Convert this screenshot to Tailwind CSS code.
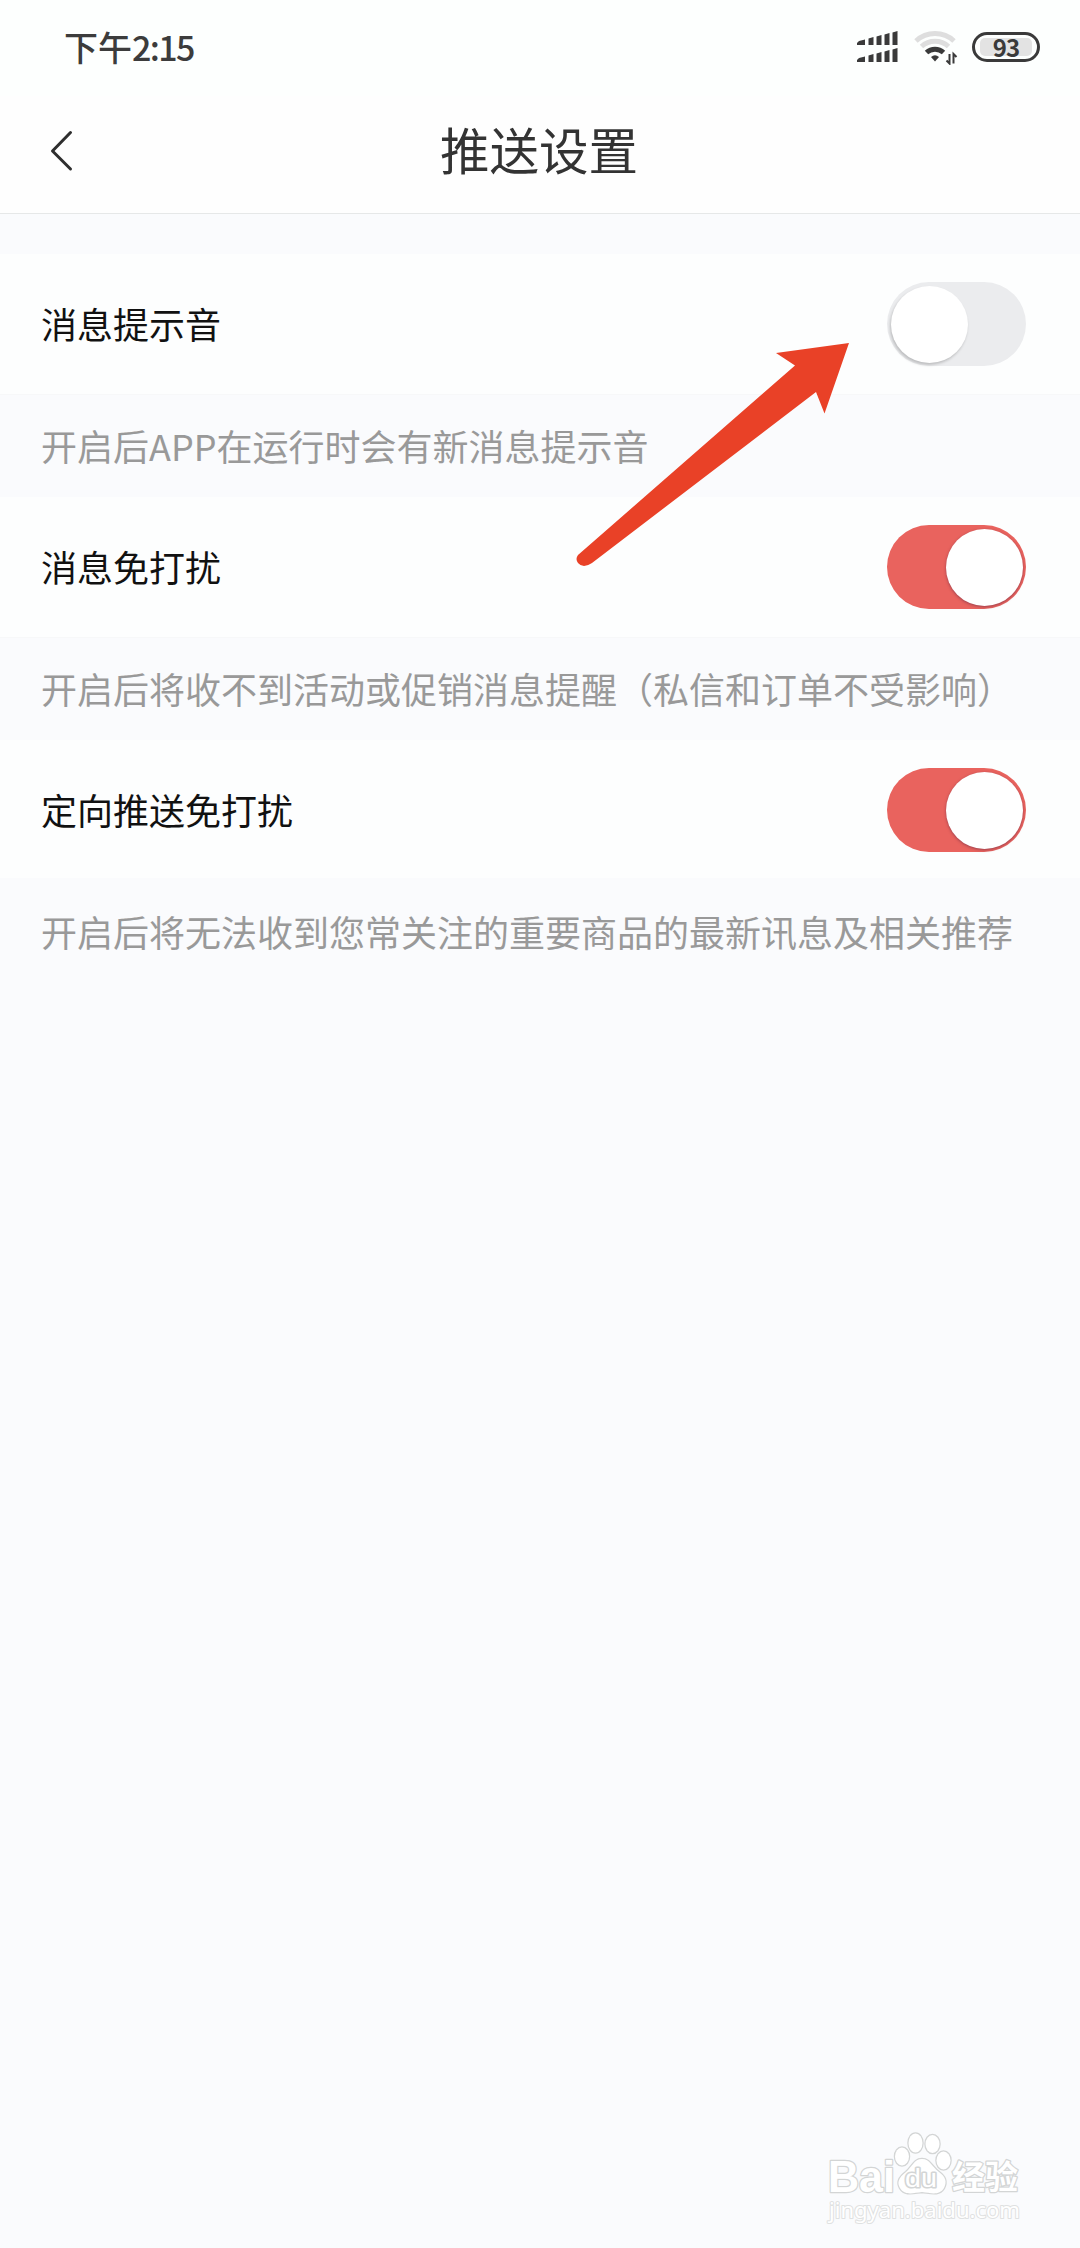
<!DOCTYPE html>
<html lang="zh-CN">
<head>
    <meta charset="UTF-8">
    <meta name="viewport" content="width=device-width, initial-scale=1.0">
    <title>推送设置</title>
    <script src="https://cdn.jsdelivr.net/npm/@tailwindcss/browser@4"></script>
    <style>
        body {
            font-family: 'Noto Sans CJK SC', sans-serif;
        }
    </style>
</head>
<body class="relative w-[1080px] h-[2248px] overflow-hidden bg-[#fafbfd]">
    <!-- ステータスバー -->
    <div class="h-24 bg-[#fdfffe] flex items-center justify-between pl-16 pr-[39px]">
        <span class="pb-[2px] text-[34px] leading-none font-medium text-[#3c3c3c]">下午<span class="tracking-[-1.6px]">2:15</span></span>
        <div class="flex items-center pb-[2px]">
            <svg class="w-[42px] h-8" viewBox="0 0 42 32" fill="#3a3a3a">
                <path d="M0 12l2-2 6-1.500v5.500h-8zM11.500 7.500l5-1.500v8h-5zM19.500 5.500l5-1.500v10h-5zM27.500 3.500l5-1.500v12h-5zM35.500 1.500l5-1.500v14h-5z"/>
                <path d="M0 29l2-2 6-1.500v5.500h-8zM11.500 24.500l5-1.500v8h-5zM19.500 22.500l5-1.500v10h-5zM27.500 20.500l5-1.500v12h-5zM35.500 18.500l5-1.500v14h-5z"/>
            </svg>
            <svg class="w-[44px] h-9 ml-[15px]" viewBox="0 0 44 36" fill="none">
                <path d="M2 12a28 28 0 0 1 38 0" stroke="#dedede" stroke-width="5"/>
                <path d="M7.500 17.500a20 20 0 0 1 27 0" stroke="#dedede" stroke-width="5"/>
                <path d="M12.500 23.500a12.500 12.500 0 0 1 17 0" stroke="#3a3a3a" stroke-width="5"/>
                <path d="M17 28q4-3.500 8 0l-4 4.500z" fill="#3a3a3a"/>
                <path d="M35.500 25v9.500l-3-3M39.500 34.500v-9.500l3 3" stroke="#3a3a3a" stroke-width="2"/>
            </svg>
            <div class="w-[68px] h-[30px] ml-[14px] mr-px rounded-full border-[3px] border-[#3a3a3a] flex items-center justify-center">
                <span class="w-[52px] h-[18px] rounded-[5px] bg-[#e3e3e3] flex items-center justify-center pb-px text-2xl leading-none font-bold tracking-[-1px] text-[#3a3a3a]">93</span>
            </div>
        </div>
    </div>

    <!-- ヘッダー -->
    <header class="relative h-[118px] bg-[#fefefe] border-b border-[#e6e8e8] flex justify-center">
        <svg class="absolute left-[50px] top-[34px] w-6 h-[42px]" viewBox="0 0 24 42" fill="none" stroke="#2e2e2e" stroke-width="3" stroke-linecap="round" stroke-linejoin="round">
            <path d="M20.500 2.500L2.500 21l18 18"/>
        </svg>
        <h1 class="mt-7 mr-[2px] text-[49.5px] leading-[50px] text-[#333]">推送设置</h1>
    </header>

    <!-- 設定リスト -->
    <main class="pt-10">
        <section class="h-[243px]">
            <div class="h-[141px] pl-[41px] pr-[54px] bg-[#fdfefe] border-b border-[#f7f8f9] flex items-center justify-between">
                <span class="pb-[3px] text-4xl text-[#111]">消息提示音</span>
                <div class="w-[139px] h-[84px] rounded-full bg-[#ebecee] flex items-center pl-1">
                    <div class="w-[77px] h-[77px] rounded-full bg-white shadow-[-1px_2px_3px_rgba(0,0,0,0.2)]"></div>
                </div>
            </div>
            <p class="h-[102px] pl-[41px] pb-[3px] flex items-center text-4xl text-[#999] whitespace-nowrap">开启后APP在运行时会有新消息提示音</p>
        </section>
        <section class="h-[243px]">
            <div class="h-[141px] pl-[41px] pr-[54px] bg-[#fdfefe] border-b border-[#f7f8f9] flex items-center justify-between">
                <span class="pb-[3px] text-4xl text-[#111]">消息免打扰</span>
                <div class="w-[139px] h-[84px] rounded-full bg-[#e9635e] flex items-center justify-end pr-[3px]">
                    <div class="w-[77px] h-[77px] rounded-full bg-white shadow-[0_1px_3px_rgba(80,30,60,0.5)]"></div>
                </div>
            </div>
            <p class="h-[102px] pl-[41px] pb-[3px] flex items-center text-4xl text-[#999] whitespace-nowrap">开启后将收不到活动或促销消息提醒（私信和订单不受影响）</p>
        </section>
        <section class="h-[243px]">
            <div class="h-[138px] pt-[2px] pl-[41px] pr-[54px] bg-[#fdfefe] flex items-center justify-between">
                <span class="pb-[3px] text-4xl text-[#111]">定向推送免打扰</span>
                <div class="w-[139px] h-[84px] rounded-full bg-[#e9635e] flex items-center justify-end pr-[3px]">
                    <div class="w-[77px] h-[77px] rounded-full bg-white shadow-[0_1px_3px_rgba(80,30,60,0.5)]"></div>
                </div>
            </div>
            <p class="h-[105px] pl-[41px] flex items-center text-4xl text-[#999] whitespace-nowrap">开启后将无法收到您常关注的重要商品的最新讯息及相关推荐</p>
        </section>
    </main>

    <!-- 矢印 -->
    <svg class="absolute left-[570px] top-[336px] w-[290px] h-[240px]" viewBox="570 336 290 240" fill="#e94127">
        <path d="M849 343L776 353L795 365.500L578 555Q575 559 578 563Q583 569 592 563L816 392L824.500 413.500Z"/>
    </svg>

    <!-- 透かしロゴ -->
    <svg class="absolute left-[820px] top-[2125px] w-[210px] h-[110px]" viewBox="820 2125 210 110" fill="#fff" stroke="#d3d5d5" stroke-width="2.500" paint-order="stroke" stroke-linejoin="round">
        <text x="828" y="2192" font-family="Liberation Sans, sans-serif" font-size="44" font-weight="700" textLength="67" lengthAdjust="spacingAndGlyphs">Bai</text>
        <g stroke-width="2.500">
            <ellipse cx="902" cy="2156.500" rx="7" ry="9"/>
            <ellipse cx="915.500" cy="2143" rx="7" ry="9.500"/>
            <ellipse cx="932.500" cy="2144" rx="7" ry="9"/>
            <ellipse cx="943.500" cy="2160.500" rx="7" ry="9"/>
            <path d="M922 2159c-8 0-10 8-16 13c-8 6-9 11-6 16c5 8 13 5 22 4c9 1 17 4 22-4c3-6 2-11-5-16c-7-5-9-13-17-13z"/>
        </g>
        <text x="905" y="2187" font-family="Liberation Sans, sans-serif" font-size="25" textLength="32" lengthAdjust="spacingAndGlyphs" stroke-width="3">du</text>
        <text x="952" y="2189" font-family="Noto Sans CJK SC, sans-serif" font-size="33" font-weight="700">经验</text>
        <text x="829" y="2218" font-family="Noto Sans, sans-serif" font-size="21.500" textLength="191" lengthAdjust="spacingAndGlyphs" stroke="#dfe1e1" stroke-width="2">jingyan.baidu.com</text>
    </svg>
</body>
</html>
